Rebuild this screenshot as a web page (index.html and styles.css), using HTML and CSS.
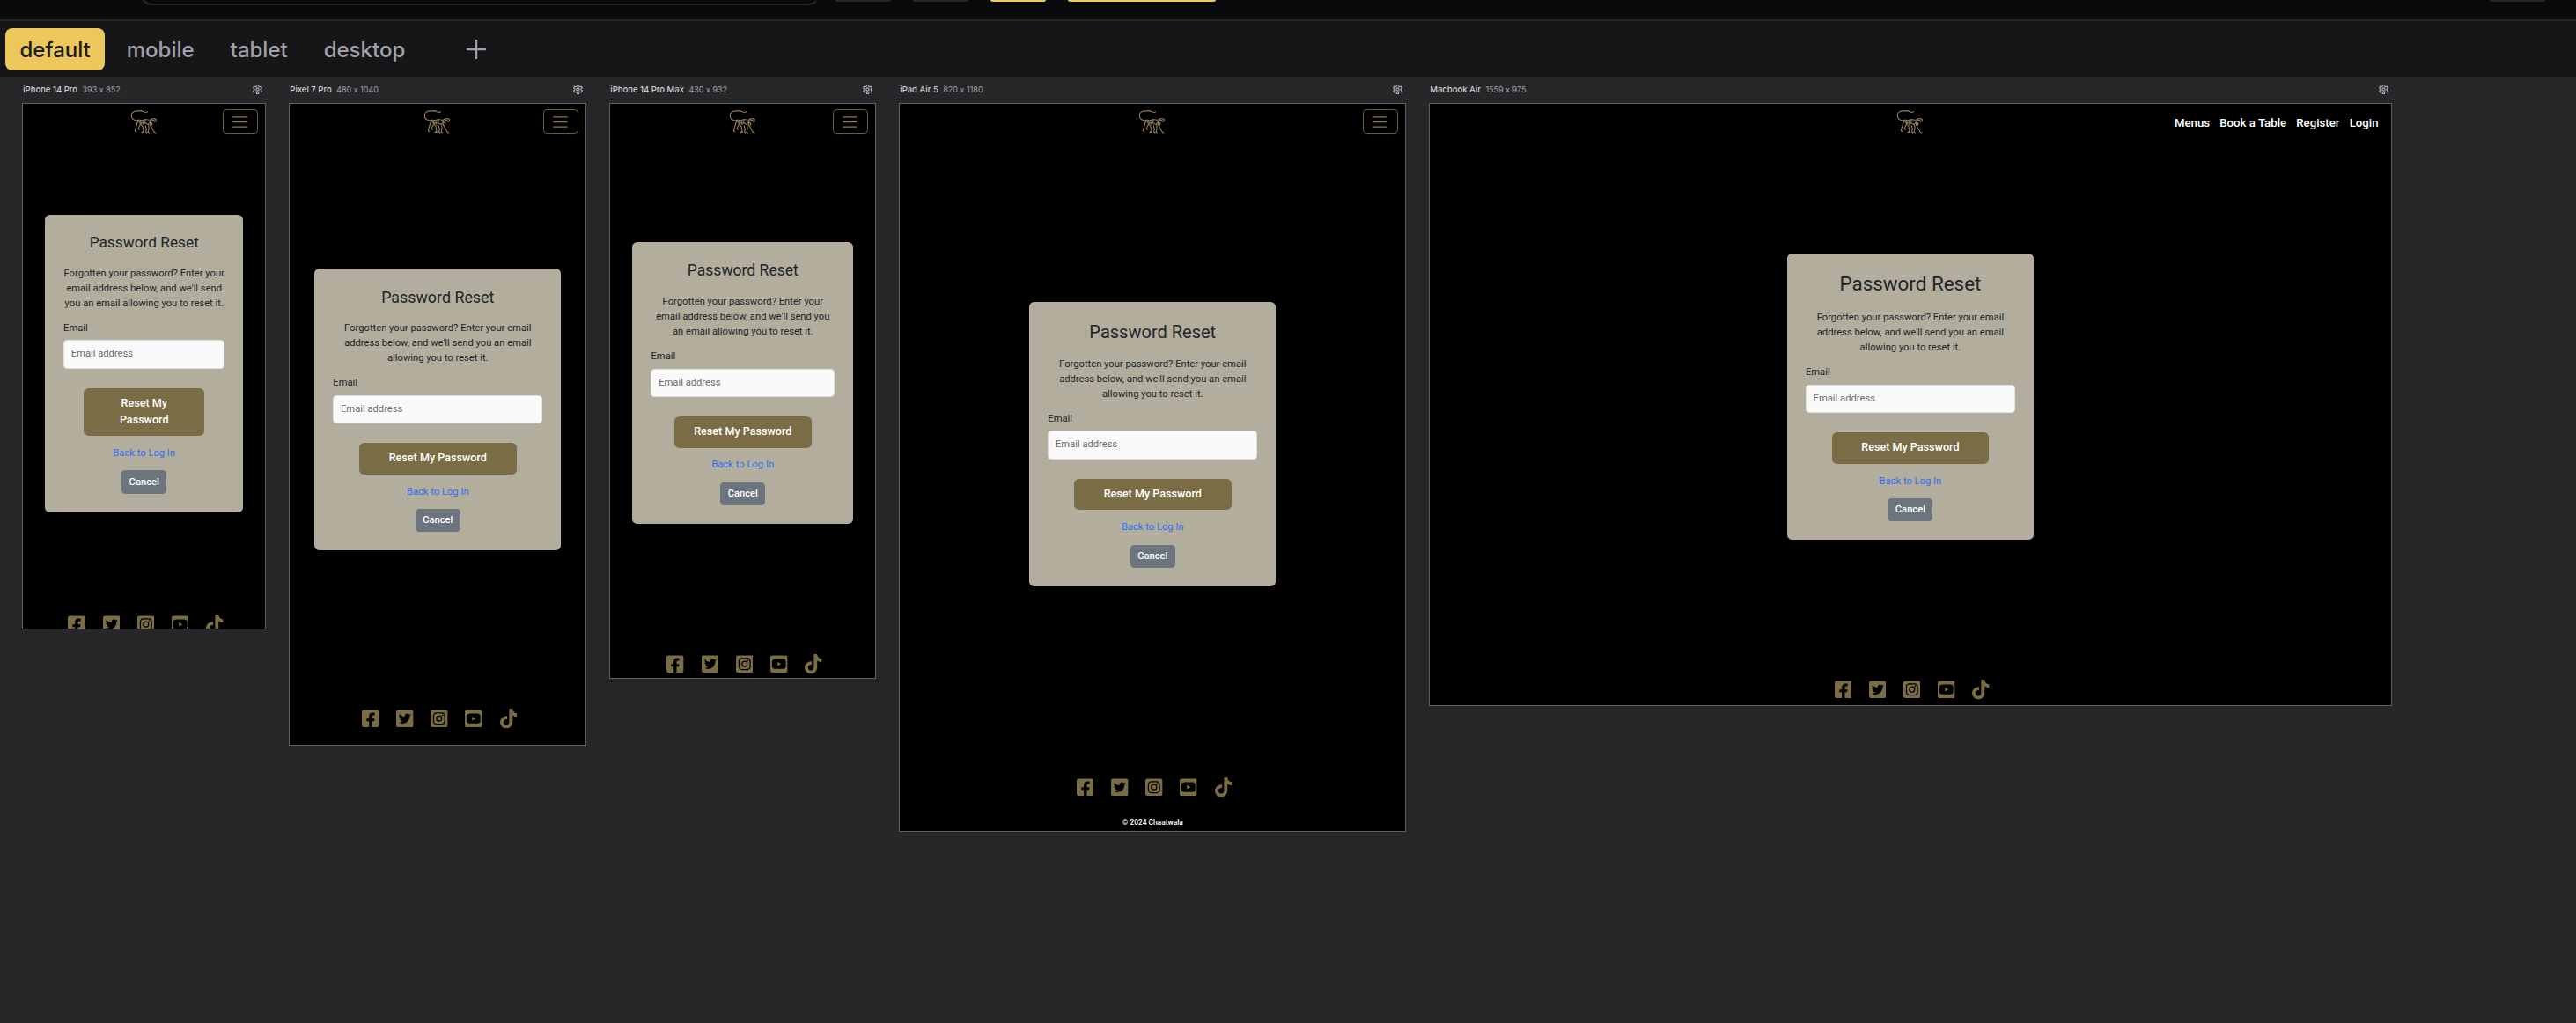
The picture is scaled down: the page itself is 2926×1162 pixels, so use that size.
FILE: index.html
```html
<!DOCTYPE html>
<html lang="en">
<head>
<meta charset="utf-8">
<title>Responsive preview</title>
<link rel="stylesheet" href="styles.css">
</head>
<body>
<svg class="defs" aria-hidden="true">
  <symbol id="gear" viewBox="2 2 20 20"><path d="M10.3 2h3.400l.6 3 2 1.100 2.900-1 1.700 2.900-2.300 2v2.400l2.300 2-1.700 2.900-2.900-1-2 1.100-.6 3h-3.400l-.6-3-2-1.100-2.900 1-1.700-2.900 2.300-2V10l-2.300-2 1.700-2.900 2.900 1 2-1.100z" transform="translate(0 .8)"/><circle cx="12" cy="12" r="3"/></symbol>
  <symbol id="monkey" viewBox="0 0 32 28"><path d="M20 2.500l-2 1-3-.8-2-1-4 .2C5 1.500 1.500 3 1.200 6.500 1 10 3 12.500 7 13l2-.8M9 12l4 .8 4-1.300 5 1 2-1.500 3.500-.5 2 1.200-.5 2-2.500.6M9 12.500l-1.500 4-1.500 5-.8 3 1.800 1.500M9.500 13l2 4-2.500 5 1.500 1.500M12 17l2 3 .8 5-1.500 1.500h2.500M14 14l1 4.500M17 12l-.5 4 4 1.500.5 4-1 5 1.800.4M22 14l.5 4 2 3.500 3 5.200 2 .3M20 17.500l2.500-3 2.500 2-1.500 3M24 11.500l1.500 1.500 2-1M11 13l1.500 3 4-1M17 18.500l1.300 4-.8 3.500 1.500 1.300"/></symbol>
  <symbol id="facebook" viewBox="0 0 448 512"><path d="M400 32H48A48 48 0 0 0 0 80v352a48 48 0 0 0 48 48h137.250V327.690h-63V256h63v-54.640c0-62.150 37-96.480 93.670-96.480 27.140 0 55.520 4.840 55.520 4.840v61h-31.270c-30.810 0-40.420 19.120-40.420 38.730V256h68.780l-11 71.690h-57.780V480H400a48 48 0 0 0 48-48V80a48 48 0 0 0-48-48z"/></symbol>
  <symbol id="twitter" viewBox="0 0 448 512"><path d="M400 32H48C21.500 32 0 53.500 0 80v352c0 26.500 21.500 48 48 48h352c26.500 0 48-21.500 48-48V80c0-26.500-21.500-48-48-48zm-48.900 158.800c.2 2.800.2 5.700.2 8.500 0 86.700-66 186.600-186.600 186.600-37.200 0-71.700-10.800-100.700-29.400 5.300.6 10.400.8 15.800.8 30.700 0 58.900-10.400 81.400-28-28.800-.6-53-19.500-61.300-45.500 10.100 1.500 19.200 1.500 29.600-1.200-30-6.100-52.500-32.500-52.500-64.400v-.8c8.700 4.900 18.900 7.900 29.600 8.300a65.447 65.447 0 0 1-29.200-54.600c0-12.200 3.200-23.400 8.900-33.100 32.300 39.800 80.800 65.800 135.200 68.600-9.300-44.500 24-80.600 64-80.600 18.900 0 35.900 7.900 47.900 20.700 14.800-2.800 29-8.300 41.600-15.800-4.900 15.200-15.200 28-28.800 36.100 13.200-1.400 26-5.100 37.800-10.200-8.900 13.100-20.100 24.700-32.900 34z"/></symbol>
  <symbol id="instagram" viewBox="0 0 448 512"><path d="M224 202.660A53.340 53.340 0 1 0 277.360 256 53.380 53.380 0 0 0 224 202.660zm124.710-41a54 54 0 0 0-30.410-30.410c-21-8.290-71-6.430-94.300-6.430s-73.250-1.930-94.310 6.430a54 54 0 0 0-30.410 30.410c-8.280 21-6.430 71.050-6.430 94.330s-1.850 73.270 6.470 94.340a54 54 0 0 0 30.410 30.410c21 8.290 71 6.430 94.310 6.430s73.240 1.930 94.300-6.430a54 54 0 0 0 30.410-30.410c8.350-21 6.430-71.050 6.430-94.330s1.920-73.260-6.430-94.330zM224 338a82 82 0 1 1 82-82 81.900 81.900 0 0 1-82 82zm85.380-148.300a19.140 19.140 0 1 1 19.130-19.140 19.100 19.100 0 0 1-19.090 19.180zM400 32H48A48 48 0 0 0 0 80v352a48 48 0 0 0 48 48h352a48 48 0 0 0 48-48V80a48 48 0 0 0-48-48zm-17.120 290c-1.290 25.630-7.140 48.340-25.850 67s-41.400 24.630-67 25.850c-26.410 1.490-105.590 1.490-132 0-25.630-1.290-48.260-7.150-67-25.850s-24.630-41.420-25.850-67c-1.490-26.420-1.490-105.610 0-132 1.290-25.630 7.070-48.340 25.850-67s41.470-24.560 67-25.780c26.410-1.490 105.590-1.490 132 0 25.630 1.290 48.330 7.150 67 25.850s24.630 41.420 25.850 67.050c1.490 26.320 1.490 105.440 0 131.880z"/></symbol>
  <symbol id="youtube" viewBox="0 0 448 512"><path d="M186.800 202.100l95.200 54.100-95.200 54.100V202.100zM448 80v352c0 26.500-21.500 48-48 48H48c-26.500 0-48-21.500-48-48V80c0-26.500 21.500-48 48-48h352c26.500 0 48 21.500 48 48zm-42 176.300s0-59.600-7.600-88.200c-4.200-15.800-16.500-28.200-32.200-32.400C337.900 128 224 128 224 128s-113.900 0-142.200 7.700c-15.700 4.200-28 16.600-32.200 32.400-7.600 28.500-7.600 88.200-7.600 88.200s0 59.600 7.600 88.200c4.200 15.800 16.500 27.700 32.200 31.900C110.100 384 224 384 224 384s113.900 0 142.200-7.700c15.700-4.200 28-16.100 32.200-31.900 7.600-28.500 7.600-88.100 7.600-88.100z"/></symbol>
  <symbol id="tiktok" viewBox="0 0 448 512"><path d="M448 209.910a210.060 210.060 0 0 1-122.770-39.250v178.720A162.550 162.550 0 1 1 185 188.310v89.890a74.620 74.620 0 1 0 52.230 71.180V0h88a121.180 121.180 0 0 0 1.860 22.170A122.180 122.180 0 0 0 381 102.390a121.430 121.430 0 0 0 67 20.140z"/></symbol>
</svg>

<header class="toolbar">
  <div class="address"></div>
  <div class="tool"></div>
  <div class="tool"></div>
  <div class="tool tool-active"></div>
  <div class="tool tool-active tool-wide"></div>
  <div class="tool tool-end"></div>
</header>

<nav class="tabs">
  <span class="tab tab-active">default</span>
  <span class="tab">mobile</span>
  <span class="tab">tablet</span>
  <span class="tab">desktop</span>
  <svg class="add" viewBox="0 0 24 24"><path d="M12 1v22M1 12h22"/></svg>
</nav>

<main class="canvas">
  <section class="device iphone">
    <div class="label"><b>iPhone 14 Pro</b><span>393 x 852</span><svg class="gear"><use href="#gear"/></svg></div>
    <div class="frame"><div class="page">
      <div class="navbar"><svg class="logo"><use href="#monkey"/></svg><div class="toggler"><svg viewBox="0 0 30 30"><path d="M4 7h22M4 15h22M4 23h22"/></svg></div></div>
      <div class="card">
        <h2>Password Reset</h2>
        <p>Forgotten your password? Enter your email address below, and we'll send you an email allowing you to reset it.</p>
        <label>Email</label><div class="input">Email address</div>
        <div class="submit">Reset My Password</div>
        <a class="back">Back to Log In</a><div class="cancel">Cancel</div>
      </div>
      <div class="social"><svg><use href="#facebook"/></svg><svg><use href="#twitter"/></svg><svg><use href="#instagram"/></svg><svg><use href="#youtube"/></svg><svg><use href="#tiktok"/></svg></div>
    </div></div>
  </section>

  <section class="device pixel">
    <div class="label"><b>Pixel 7 Pro</b><span>480 x 1040</span><svg class="gear"><use href="#gear"/></svg></div>
    <div class="frame"><div class="page">
      <div class="navbar"><svg class="logo"><use href="#monkey"/></svg><div class="toggler"><svg viewBox="0 0 30 30"><path d="M4 7h22M4 15h22M4 23h22"/></svg></div></div>
      <div class="card">
        <h2>Password Reset</h2>
        <p>Forgotten your password? Enter your email address below, and we'll send you an email allowing you to reset it.</p>
        <label>Email</label><div class="input">Email address</div>
        <div class="submit">Reset My Password</div>
        <a class="back">Back to Log In</a><div class="cancel">Cancel</div>
      </div>
      <div class="social"><svg><use href="#facebook"/></svg><svg><use href="#twitter"/></svg><svg><use href="#instagram"/></svg><svg><use href="#youtube"/></svg><svg><use href="#tiktok"/></svg></div>
    </div></div>
  </section>

  <section class="device promax">
    <div class="label"><b>iPhone 14 Pro Max</b><span>430 x 932</span><svg class="gear"><use href="#gear"/></svg></div>
    <div class="frame"><div class="page">
      <div class="navbar"><svg class="logo"><use href="#monkey"/></svg><div class="toggler"><svg viewBox="0 0 30 30"><path d="M4 7h22M4 15h22M4 23h22"/></svg></div></div>
      <div class="card">
        <h2>Password Reset</h2>
        <p>Forgotten your password? Enter your email address below, and we'll send you an email allowing you to reset it.</p>
        <label>Email</label><div class="input">Email address</div>
        <div class="submit">Reset My Password</div>
        <a class="back">Back to Log In</a><div class="cancel">Cancel</div>
      </div>
      <div class="social"><svg><use href="#facebook"/></svg><svg><use href="#twitter"/></svg><svg><use href="#instagram"/></svg><svg><use href="#youtube"/></svg><svg><use href="#tiktok"/></svg></div>
    </div></div>
  </section>

  <section class="device ipad">
    <div class="label"><b>iPad Air 5</b><span>820 x 1180</span><svg class="gear"><use href="#gear"/></svg></div>
    <div class="frame"><div class="page">
      <div class="navbar"><svg class="logo"><use href="#monkey"/></svg><div class="toggler"><svg viewBox="0 0 30 30"><path d="M4 7h22M4 15h22M4 23h22"/></svg></div></div>
      <div class="card">
        <h2>Password Reset</h2>
        <p>Forgotten your password? Enter your email address below, and we'll send you an email allowing you to reset it.</p>
        <label>Email</label><div class="input">Email address</div>
        <div class="submit">Reset My Password</div>
        <a class="back">Back to Log In</a><div class="cancel">Cancel</div>
      </div>
      <div class="social"><svg><use href="#facebook"/></svg><svg><use href="#twitter"/></svg><svg><use href="#instagram"/></svg><svg><use href="#youtube"/></svg><svg><use href="#tiktok"/></svg></div>
      <div class="copyright">© 2024 Chaatwala</div>
    </div></div>
  </section>

  <section class="device macbook">
    <div class="label"><b>Macbook Air</b><span>1559 x 975</span><svg class="gear"><use href="#gear"/></svg></div>
    <div class="frame"><div class="page">
      <div class="navbar"><svg class="logo"><use href="#monkey"/></svg><div class="links"><span>Menus</span><span>Book a Table</span><span>Register</span><span>Login</span></div></div>
      <div class="card">
        <h2>Password Reset</h2>
        <p>Forgotten your password? Enter your email address below, and we'll send you an email allowing you to reset it.</p>
        <label>Email</label><div class="input">Email address</div>
        <div class="submit">Reset My Password</div>
        <a class="back">Back to Log In</a><div class="cancel">Cancel</div>
      </div>
      <div class="social"><svg><use href="#facebook"/></svg><svg><use href="#twitter"/></svg><svg><use href="#instagram"/></svg><svg><use href="#youtube"/></svg><svg><use href="#tiktok"/></svg></div>
    </div></div>
  </section>
</main>
</body>
</html>
```
FILE: styles.css
```css
* { box-sizing: border-box; }
body {
  margin: 0;
  height: 1162px;
  overflow: hidden;
  background: #27272a;
  font-family: Inter, "Liberation Sans", sans-serif;
}
.defs { display: none; }

/* Bottom edge of the toolbar */
.toolbar {
  display: flex;
  align-items: flex-start;
  height: 24px;
  padding-left: 160px;
  background: #09090b;
  border-bottom: 2px solid #27272a;
}
.address {
  width: 767px;
  height: 6px;
  margin-right: 22px;
  overflow: hidden;
  display: flex;
  align-items: flex-end;
}
.address::before {
  content: "";
  flex: none;
  width: 767px;
  height: 40px;
  border: 2px solid #27272a;
  border-radius: 12px;
}
.tool {
  width: 63px;
  height: 2px;
  margin-right: 25px;
  background: #27272a;
  border-radius: 0 0 4px 4px / 0 0 2px 2px;
}
.tool-active { background: #edc75c; }
.tool-wide { width: 168px; }
.tool-end { margin: 0 35px 0 auto; }

.tabs {
  display: flex;
  align-items: center;
  height: 64px;
  padding-left: 6px;
  gap: 8px;
  background: #161618;
}
.tab {
  height: 48px;
  padding: 0 16.500px;
  border-radius: 8px;
  color: #a1a1aa;
  font-size: 24px;
  font-weight: 500;
  line-height: 49px;
}
.tab-active { background: #edc75c; color: #1c1c1e; }
.add {
  width: 22px;
  height: 22px;
  margin-left: 45px;
  fill: none;
  stroke: #a1a1aa;
  stroke-width: 2.600;
  stroke-linecap: round;
}

.canvas {
  display: flex;
  align-items: flex-start;
  gap: 26px;
  padding-left: 25.200px;
}
.label {
  display: flex;
  align-items: center;
  height: 29px;
  padding: 0 4px 2px 1px;
  gap: 5.500px;
  color: #a1a1aa;
  font-size: 9px;
  font-feature-settings: "calt" 0;
}
.label b { color: #d0d0d4; font-size: 9.500px; font-weight: 500; }
.gear {
  width: 11px;
  height: 11px;
  margin-left: auto;
  fill: none;
  stroke: #b4b4bb;
  stroke-width: 2;
}
.frame { border: 1px solid #5f5f62; }

/* Pages are laid out at device size and shown at 70% */
.page {
  zoom: .7;
  display: flex;
  flex-direction: column;
  align-items: center;
  width: var(--w);
  height: var(--h);
  overflow: hidden;
  background: #000;
  color: #212529;
  font: 400 16px/24px Roboto, sans-serif;
}
.iphone { --w: 393px; --h: 852px; --card: 322px; --top: 123.500px; --title: 24.700px; --social: 165px; }
.pixel { --w: 480px; --h: 1040px; --card: 400px; --top: 211.500px; --title: 25.500px; --social: 256px; }
.promax { --w: 430px; --h: 932px; --card: 358px; --top: 169px; --title: 25.070px; --social: 211.500px; }
.ipad { --w: 820px; --h: 1180px; --card: 400px; --top: 266px; --title: 28.600px; --social: 309.500px; }
.macbook { --w: 1559px; --h: 975px; --card: 400px; --top: 186.500px; --title: 32px; --social: 227px; }

.navbar {
  display: grid;
  grid-template-columns: 1fr 46px 1fr;
  align-items: center;
  width: 100%;
  height: 56px;
  flex: none;
  padding: 1px 12px 0;
}
.logo {
  grid-column: 2;
  width: 46px;
  height: 40px;
  fill: none;
  stroke: #8f7a5a;
  stroke-width: 1.150;
}
.toggler {
  justify-self: end;
  width: 57px;
  height: 41px;
  padding: 5px 12px;
  border: 1.500px solid #6b5e3a;
  border-radius: 6px;
}
.toggler svg {
  display: block;
  width: 30px;
  height: 30px;
  fill: none;
  stroke: #8a7a4e;
  stroke-width: 2;
  stroke-linecap: round;
}
.links {
  justify-self: end;
  display: flex;
  gap: 16px;
  padding: 7px 8px 0 0;
  color: #fff;
  font-size: 18.900px;
  font-weight: 500;
}
.card {
  display: flex;
  flex-direction: column;
  align-items: center;
  flex: none;
  width: var(--card);
  margin-top: var(--top);
  padding: 30px;
  border-radius: 8px;
  background: #b2ad9c;
}
.card h2 {
  margin: 0 0 8px;
  padding-top: .5px;
  font-size: var(--title);
  font-weight: 400;
  line-height: 1.2;
}
.card p { margin: 17px 0 16px; text-align: center; }
.card label { align-self: flex-start; margin-bottom: 7px; }
.input {
  width: 100%;
  height: 46px;
  padding: 10px 11px;
  border: 1px solid #dee2e6;
  border-radius: 6px;
  background: #f9f9f9;
  color: #6c6c6c;
}
.submit {
  width: 75%;
  margin: 31.500px 0 17px;
  padding: 12px 24px;
  border-radius: 8px;
  background: #7a6c45;
  color: #fff;
  font-size: 18px;
  font-weight: 500;
  line-height: 27px;
  text-align: center;
}
.back { margin-bottom: 15px; color: #2f6df6; }
.cancel {
  height: 38px;
  padding: 7.500px 12px;
  border-radius: 6px;
  background: #6c757d;
  color: #fff;
  font-weight: 500;
}
.social {
  display: flex;
  flex: none;
  gap: 28px;
  margin-top: var(--social);
  padding-left: 5px;
}
.social svg { width: 28px; height: 32px; fill: #7a6c45; }
.copyright {
  margin-top: 29px;
  color: #fff;
  font-size: 12px;
  font-weight: 500;
}
```
